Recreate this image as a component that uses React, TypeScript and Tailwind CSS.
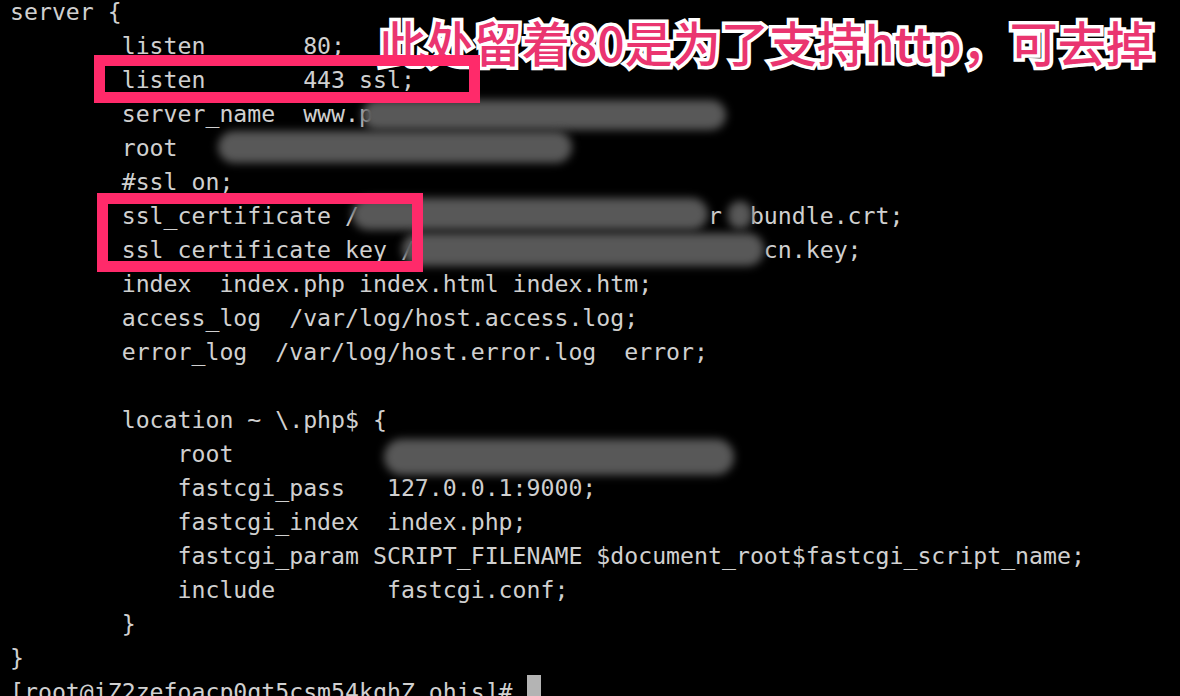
import React from 'react';

const lines = [
  'server {',
  '        listen       80;',
  '        listen       443 ssl;',
  '        server_name  www.p',
  '        root',
  '        #ssl on;',
  '        ssl_certificate /                         r  bundle.crt;',
  '        ssl_certificate_key /                         cn.key;',
  '        index  index.php index.html index.htm;',
  '        access_log  /var/log/host.access.log;',
  '        error_log  /var/log/host.error.log  error;',
  '',
  '        location ~ \\.php$ {',
  '            root',
  '            fastcgi_pass   127.0.0.1:9000;',
  '            fastcgi_index  index.php;',
  '            fastcgi_param SCRIPT_FILENAME $document_root$fastcgi_script_name;',
  '            include        fastcgi.conf;',
  '        }',
  '}',
];

// blurred-out secrets: [left, top, width, height]
const blurs = [
  [362, 100, 364, 30],
  [218, 131, 354, 32],
  [352, 198, 356, 32],
  [728, 201, 24, 28],
  [402, 233, 362, 33],
  [384, 439, 350, 36],
];

const note = '此处留着80是为了支持http，可去掉';

export default function App() {
  return (
    <div className="relative w-[1180px] h-[696px] overflow-hidden bg-black">
      <div className="mt-[-5px] pl-[10px] font-['DejaVu_Sans_Mono','Liberation_Mono',monospace] text-[23.2px] leading-[34px] text-[#d0d0d0] whitespace-pre">
        {lines.map((line, i) => (
          <div key={i} className="h-[34px]">
            {line}
          </div>
        ))}
        <div className="h-[34px]">
          [root@iZ2zefoacp0qt5csm54kqhZ ohis]#{' '}
          <span className="inline-block align-top w-[14px] h-[32px] bg-[#b4b4b4]" />
        </div>
      </div>

      {blurs.map(([l, t, w, h], i) => (
        <div
          key={i}
          className="absolute rounded-full bg-[#585858] blur-[4px]"
          style={{ left: l, top: t, width: w, height: h }}
        />
      ))}

      <div className="absolute left-[378px] top-[17px] grid font-['Noto_Sans_CJK_SC',sans-serif] font-medium text-[48px] leading-none whitespace-nowrap">
        <span className="[grid-area:1/1] text-white [-webkit-text-stroke:7px_#fff]">{note}</span>
        <span className="[grid-area:1/1] text-[#ea3570]">{note}</span>
      </div>

      <div className="absolute left-[94px] top-[55px] w-[386px] h-[48px] border-[11px] border-[#ff2a6a]" />
      <div className="absolute left-[97px] top-[193px] w-[326px] h-[79px] border-[11px] border-[#ff2a6a]" />
    </div>
  );
}
